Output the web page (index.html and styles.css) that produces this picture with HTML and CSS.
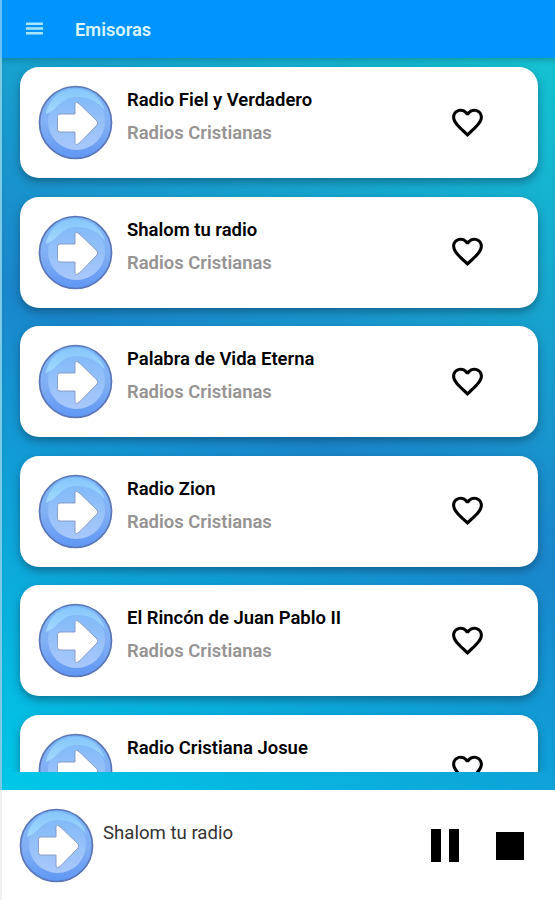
FILE: index.html
```html
<!DOCTYPE html>
<html lang="es">
<head>
    <meta charset="UTF-8">
    <meta name="viewport" content="width=device-width, initial-scale=1.0">
    <title>Emisoras</title>
    <link rel="stylesheet" href="styles.css">
</head>
<body>
    <!-- Shared icons -->
    <svg class="sprites" width="0" height="0">
        <defs>
            <linearGradient id="ball" x1="0" y1="0" x2="0" y2="1">
                <stop offset="0" stop-color="#7ab8f8"/>
                <stop offset="0.5" stop-color="#83b0f4"/>
                <stop offset="1" stop-color="#5f97f4"/>
            </linearGradient>
            <linearGradient id="inner" x1="0" y1="0" x2="0" y2="1">
                <stop offset="0" stop-color="#7fb9f8"/>
                <stop offset="1" stop-color="#a9c8fb"/>
            </linearGradient>
            <linearGradient id="shine" x1="0" y1="0" x2="0" y2="1">
                <stop offset="0" stop-color="#86c6fc"/>
                <stop offset="1" stop-color="#a2dafe"/>
            </linearGradient>
        </defs>
        <symbol id="arrow" viewBox="0 0 75 75">
            <circle cx="37.500" cy="37.500" r="36" fill="url(#ball)" stroke="#5b76b8" stroke-width="1.700"/>
            <circle cx="38.500" cy="36.500" r="28.500" fill="url(#inner)"/>
            <path d="M8 29C11 13 23 4 37 4s26 8 30 22C60 16 50 12 39 12 24 12 20 23 12 27z" fill="url(#shine)"/>
            <path d="M22 29H37V20Q37 16 40 18L43 20.500 59 36Q60.500 38 59 40L43 56.500 40 59Q37 61 37 57V47H22Q19.500 47 19.500 44.500V31.500Q19.500 29 22 29z" fill="#fff" stroke="#8295c5" stroke-width="0.900"/>
        </symbol>
        <symbol id="heart" viewBox="0 0 24 24">
            <path d="M16.500 3c-1.740 0-3.410.81-4.500 2.090C10.910 3.810 9.240 3 7.500 3 4.420 3 2 5.420 2 8.500c0 3.780 3.400 6.860 8.550 11.540L12 21.350l1.450-1.320C18.600 15.360 22 12.280 22 8.500 22 5.420 19.580 3 16.500 3zm-4.400 15.550l-.1.100-.1-.1C7.140 14.240 4 11.390 4 8.500 4 6.500 5.500 5 7.500 5c1.540 0 3.040.99 3.570 2.360h1.870C13.460 5.990 14.960 5 16.500 5c2 0 3.500 1.500 3.500 3.500 0 2.890-3.140 5.740-7.900 10.050z"/>
        </symbol>
    </svg>

    <header class="toolbar">
        <svg class="menu" viewBox="0 0 17 13"><path d="M0 .5h17v2.500H0zM0 5.200h17v2.500H0zM0 10h17v2.500H0z"/></svg>
        <h1>Emisoras</h1>
    </header>

    <main class="content">
        <div class="list">
            <div class="card">
                <svg class="logo"><use href="#arrow"/></svg>
                <div class="info">
                    <h2>Radio Fiel y Verdadero</h2>
                    <p>Radios Cristianas</p>
                </div>
                <svg class="fav"><use href="#heart"/></svg>
            </div>
            <div class="card">
                <svg class="logo"><use href="#arrow"/></svg>
                <div class="info">
                    <h2>Shalom tu radio</h2>
                    <p>Radios Cristianas</p>
                </div>
                <svg class="fav"><use href="#heart"/></svg>
            </div>
            <div class="card">
                <svg class="logo"><use href="#arrow"/></svg>
                <div class="info">
                    <h2>Palabra de Vida Eterna</h2>
                    <p>Radios Cristianas</p>
                </div>
                <svg class="fav"><use href="#heart"/></svg>
            </div>
            <div class="card">
                <svg class="logo"><use href="#arrow"/></svg>
                <div class="info">
                    <h2>Radio Zion</h2>
                    <p>Radios Cristianas</p>
                </div>
                <svg class="fav"><use href="#heart"/></svg>
            </div>
            <div class="card">
                <svg class="logo"><use href="#arrow"/></svg>
                <div class="info">
                    <h2>El Rincón de Juan Pablo II</h2>
                    <p>Radios Cristianas</p>
                </div>
                <svg class="fav"><use href="#heart"/></svg>
            </div>
            <div class="card">
                <svg class="logo"><use href="#arrow"/></svg>
                <div class="info">
                    <h2>Radio Cristiana Josue</h2>
                </div>
                <svg class="fav"><use href="#heart"/></svg>
            </div>
        </div>
    </main>

    <footer class="player">
        <svg class="logo"><use href="#arrow"/></svg>
        <span class="playing">Shalom tu radio</span>
        <svg class="pause" viewBox="0 0 28 33"><path d="M0 0h10v33H0zM18 0h10v33H18z"/></svg>
        <svg class="stop" viewBox="0 0 28 28"><path d="M0 0h28v28H0z"/></svg>
    </footer>
</body>
</html>
```

FILE: styles.css
```css
* {
    box-sizing: border-box;
}

body {
    font-family: Roboto, sans-serif;
    margin: 0;
    height: 900px;
    display: flex;
    flex-direction: column;
    overflow: hidden;
    background-color: #fff;
}

h1, h2, p {
    margin: 0;
}

.sprites {
    position: absolute;
}

.toolbar {
    height: 58px;
    flex: none;
    display: flex;
    align-items: center;
    padding-left: 24px;
    background-color: #0094ff;
    border-left: 2px solid #6cc0fa;
    color: #d8f5ff;
}

.menu {
    width: 17px;
    height: 13px;
    margin-bottom: 2px;
    fill: #a8e6ff;
}

.toolbar h1 {
    margin: 1px 0 0 32px;
    font-size: 18.300px;
    font-weight: 600;
}

.content {
    height: 732px;
    flex: none;
    padding-bottom: 18px;
    border-left: 2px solid #7ccbe4;
    background: linear-gradient(27deg, #00c8e8 0%, #1a86cc 50%, #14c4d2 100%);
    box-shadow: inset 0 5px 5px -2px rgba(10, 60, 80, 0.25);
}

.list {
    height: 714px;
    overflow: hidden;
    padding: 9px 17px 0 18px;
}

/* Station cards */
.card {
    height: 111px;
    margin-bottom: 18.500px;
    padding: 18px 52px 0 18px;
    display: flex;
    align-items: flex-start;
    background-color: #fff;
    border-radius: 19px;
    box-shadow: 0 4px 9px rgba(15, 55, 85, 0.5);
}

.logo {
    width: 75px;
    height: 75px;
    flex: none;
}

.info {
    flex: 1;
    margin-left: 14px;
    padding-top: 4px;
}

.info h2, .info p {
    font-size: 18.450px;
    line-height: 22px;
    font-weight: 600;
}

.info p {
    margin-top: 11px;
    color: #969393;
}

.fav {
    width: 37px;
    height: 37px;
    margin-top: 18.500px;
}

/* Bottom player */
.player {
    flex: 1;
    display: flex;
    align-items: flex-start;
    padding: 18px 31px 0 17px;
    border-left: 2px solid #f0f0f0;
}

.playing {
    flex: 1;
    margin: 14px 0 0 9px;
    font-size: 18.600px;
    line-height: 22px;
    color: #333;
}

.pause {
    width: 28px;
    height: 33px;
    margin: 21px 37px 0 0;
}

.stop {
    width: 28px;
    height: 28px;
    margin-top: 24px;
}
```
